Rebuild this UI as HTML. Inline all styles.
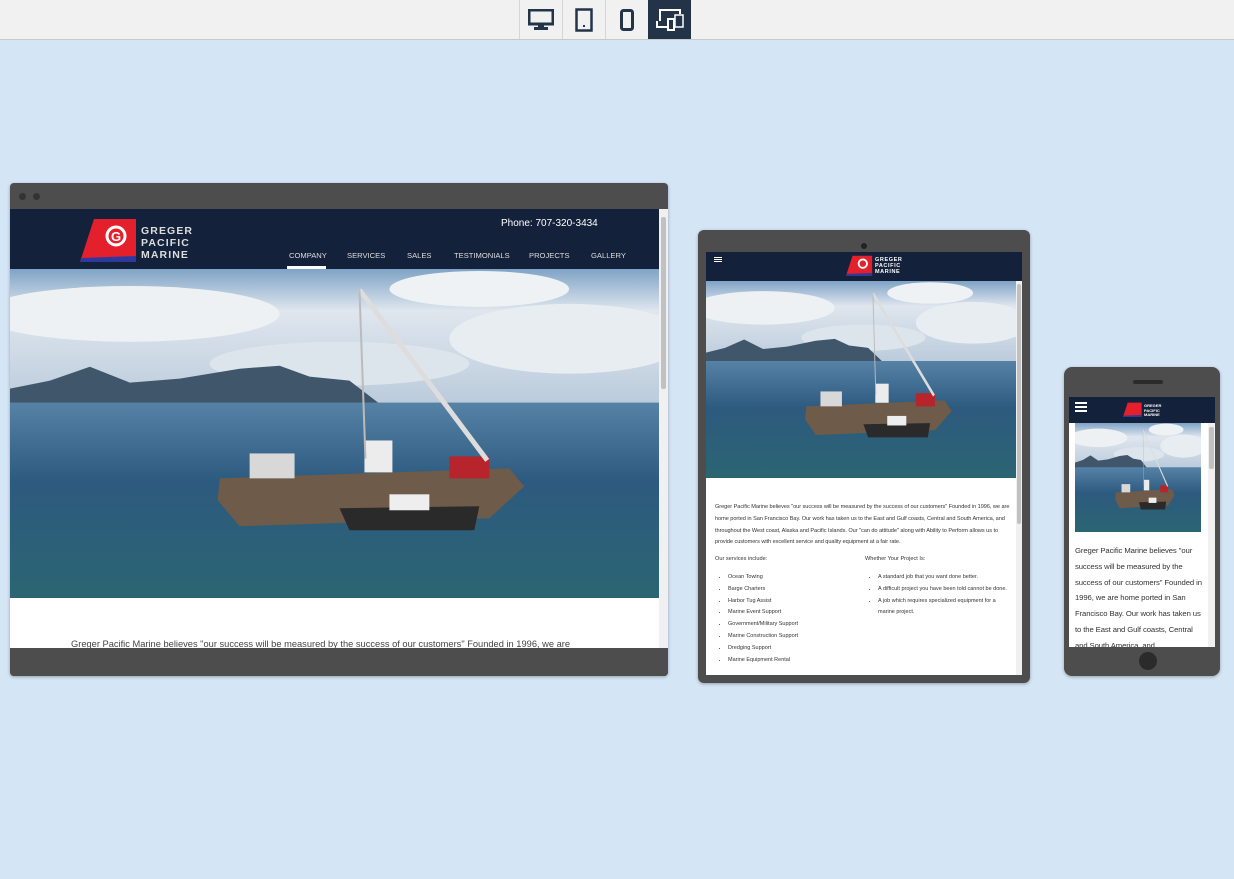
<!DOCTYPE html>
<html><head><meta charset="utf-8"><style>
*{margin:0;padding:0;box-sizing:border-box}
body{width:1234px;height:879px;background:#d4e5f5;font-family:"Liberation Sans",sans-serif;position:relative;overflow:hidden}
.a{position:absolute}
.top{left:0;top:0;width:1234px;height:40px;background:#f1f1f1;border-bottom:1px solid #c9c9c9}
.tb{top:0;height:39px;width:43px;border-left:1px solid #d6d6d6;display:flex;align-items:center;justify-content:center}
.navy{background:#13223a}
.photo{overflow:hidden}
.photo svg{width:100%;height:100%;display:block}
.sb{background:#f0f0f0}
.sb i{position:absolute;left:2px;width:5px;background:#c1c1c1;border-radius:2px}
.t{color:#333;font-family:"Liberation Sans",sans-serif}
ul{list-style:disc}
</style></head><body>
<div class="a top"></div>
<div class="a tb" style="left:519px"><svg width="26" height="22" viewBox="0 0 26 22"><rect x="1" y="1" width="24" height="14" fill="none" stroke="#233449" stroke-width="3"/><rect x="10" y="15" width="6" height="4" fill="#233449"/><rect x="6" y="18" width="14" height="3" fill="#233449"/></svg></div>
<div class="a tb" style="left:562px"><svg width="18" height="24" viewBox="0 0 18 24"><rect x="1.5" y="1.5" width="15" height="21" fill="none" stroke="#233449" stroke-width="2.5"/><rect x="8" y="17" width="2" height="2" fill="#233449"/></svg></div>
<div class="a tb" style="left:605px"><svg width="14" height="22" viewBox="0 0 14 22"><rect x="1.5" y="1.5" width="11" height="19" rx="2" fill="none" stroke="#233449" stroke-width="3"/></svg></div>
<div class="a tb" style="left:648px;background:#233449;border-left:none"><svg width="32" height="26" viewBox="0 0 32 26"><path d="M6 14V3h20v4M3 14v6h10" fill="none" stroke="#fff" stroke-width="2"/><rect x="14" y="12" width="6" height="11" fill="none" stroke="#fff" stroke-width="2"/><rect x="21" y="8" width="8" height="12" fill="none" stroke="#fff" stroke-width="1.5"/></svg></div>

<svg width="0" height="0" style="position:absolute"><defs>
<linearGradient id="sky" x1="0" y1="0" x2="0" y2="1"><stop offset="0" stop-color="#7fa3c6"/><stop offset=".3" stop-color="#dfe6ee"/><stop offset="1" stop-color="#b9cadb"/></linearGradient>
<linearGradient id="sea" x1="0" y1="0" x2="0" y2="1"><stop offset="0" stop-color="#5682a6"/><stop offset=".4" stop-color="#2d5a7f"/><stop offset="1" stop-color="#2b6572"/></linearGradient>
<symbol id="ph" viewBox="0 0 650 330" preserveAspectRatio="none">
<rect width="650" height="140" fill="url(#sky)"/>
<ellipse cx="120" cy="45" rx="150" ry="28" fill="#eef1f4"/><ellipse cx="560" cy="70" rx="120" ry="35" fill="#e8edf2"/><ellipse cx="330" cy="95" rx="130" ry="22" fill="#dde5ec"/><ellipse cx="470" cy="20" rx="90" ry="18" fill="#eef2f5"/>
<path d="M0 120 L40 112 L80 98 L120 114 L170 110 L230 100 L270 97 L300 108 L340 112 L370 135 L0 135Z" fill="#3f566b"/>
<rect y="134" width="650" height="196" fill="url(#sea)"/>
<path d="M210 210 L500 200 L515 218 L480 250 L230 258 L208 232Z" fill="#6e5b49"/>
<rect x="240" y="185" width="45" height="25" fill="#d8d8d8"/><rect x="355" y="172" width="28" height="32" fill="#ececec"/>
<rect x="440" y="188" width="40" height="22" fill="#b8242c"/>
<path d="M330 240 L470 238 L465 262 L340 262Z" fill="#2a2a2a"/><rect x="380" y="226" width="40" height="16" fill="#eee"/>
<path d="M350 21 L478 192" stroke="#ddd" stroke-width="5"/><path d="M350 21 L356 190" stroke="#bbb" stroke-width="2"/>
</symbol>
</defs></svg>

<!-- desktop -->
<div class="a" style="left:10px;top:183px;width:658px;height:493px;background:#4d4d4d;border-radius:4px;box-shadow:0 1px 3px rgba(0,0,0,.3)"></div>
<div class="a" style="left:19px;top:193px;width:7px;height:7px;border-radius:50%;background:#333"></div>
<div class="a" style="left:33px;top:193px;width:7px;height:7px;border-radius:50%;background:#333"></div>
<div class="a" style="left:10px;top:209px;width:649px;height:439px;background:#fff"></div>
<div class="a sb" style="left:659px;top:209px;width:9px;height:439px"><i style="top:8px;height:172px"></i></div>
<div class="a navy" style="left:10px;top:209px;width:649px;height:60px"></div>
<svg class="a" style="left:80px;top:218px" width="60" height="46" viewBox="0 0 60 46"><path d="M14 1 H56 V44 H0Z" fill="#e3202b"/><path d="M2 40 L56 38 L56 44 H0Z" fill="#2c3aa0"/><circle cx="36" cy="18" r="9" fill="none" stroke="#fff" stroke-width="3"/><text x="31" y="23" fill="#fff" font-size="13" font-weight="bold" font-family="Liberation Sans">G</text></svg>
<div class="a" style="left:141px;top:225px;color:#ddd;font-weight:bold;font-size:10.5px;line-height:12px;letter-spacing:1.1px">GREGER<br>PACIFIC<br>MARINE</div>
<div class="a" style="left:501px;top:218px;color:#fff;font-size:10px">Phone: 707-320-3434</div>
<div class="a" style="top:251px;left:289px;color:#ddd;font-size:7.6px;display:flex;gap:0">
<span style="width:58px">COMPANY</span><span style="width:60px">SERVICES</span><span style="width:47px">SALES</span><span style="width:75px">TESTIMONIALS</span><span style="width:62px">PROJECTS</span><span>GALLERY</span></div>
<div class="a" style="left:287px;top:266px;width:39px;height:3px;background:#fff"></div>
<div class="a photo" style="left:10px;top:269px;width:649px;height:329px"><svg><use href="#ph"/></svg></div>
<div class="a t" style="left:71px;top:639px;font-size:9.3px;color:#444">Greger Pacific Marine believes "our success will be measured by the success of our customers" Founded in 1996, we are</div>
<div class="a" style="left:10px;top:648px;width:658px;height:28px;background:#4d4d4d;border-radius:0 0 4px 4px"></div>

<!-- tablet -->
<div class="a" style="left:698px;top:230px;width:332px;height:453px;background:#4d4d4d;border-radius:6px;box-shadow:0 1px 3px rgba(0,0,0,.3)"></div>
<div class="a" style="left:861px;top:243px;width:6px;height:6px;border-radius:50%;background:#222"></div>
<div class="a" style="left:706px;top:252px;width:316px;height:423px;background:#fff"></div>
<div class="a sb" style="left:1016px;top:281px;width:6px;height:394px"><i style="left:1px;width:4px;top:3px;height:240px"></i></div>
<div class="a navy" style="left:706px;top:252px;width:316px;height:29px"></div>
<div class="a" style="left:714px;top:257px;width:8px;height:5px;border-top:1px solid #fff;border-bottom:1px solid #fff"></div><div class="a" style="left:714px;top:259px;width:8px;height:1px;background:#fff"></div>
<svg class="a" style="left:846px;top:255px" width="28" height="22" viewBox="0 0 60 46"><path d="M14 1 H56 V44 H0Z" fill="#e3202b"/><path d="M2 40 L56 38 L56 44 H0Z" fill="#2c3aa0"/><circle cx="36" cy="18" r="9" fill="none" stroke="#fff" stroke-width="4"/></svg>
<div class="a" style="left:875px;top:257px;color:#fff;font-weight:bold;font-size:5.5px;line-height:6px;letter-spacing:.6px">GREGER<br>PACIFIC<br>MARINE</div>
<div class="a photo" style="left:706px;top:281px;width:310px;height:197px"><svg><use href="#ph"/></svg></div>
<div class="a t" style="left:715px;top:502px;width:296px;font-size:5.6px;line-height:11.8px;letter-spacing:-.05px">Greger Pacific Marine believes "our success will be measured by the success of our customers" Founded in 1996, we are home ported in San Francisco Bay. Our work has taken us to the East and Gulf coasts, Central and South America, and throughout the West coast, Alaska and Pacific Islands. Our "can do attitude" along with Ability to Perform allows us to provide customers with excellent service and quality equipment at a fair rate.</div>
<div class="a t" style="left:715px;top:556px;font-size:5.6px">Our services include:</div>
<div class="a t" style="left:865px;top:556px;font-size:5.6px">Whether Your Project Is:</div>
<ul class="a t" style="left:728px;top:572px;font-size:5.5px;line-height:11.8px"><li>Ocean Towing</li><li>Barge Charters</li><li>Harbor Tug Assist</li><li>Marine Event Support</li><li>Government/Military Support</li><li>Marine Construction Support</li><li>Dredging Support</li><li>Marine Equipment Rental</li></ul>
<ul class="a t" style="left:878px;top:572px;width:130px;font-size:5.5px;line-height:11.8px"><li>A standard job that you want done better.</li><li>A difficult project you have been told cannot be done.</li><li>A job which requires specialized equipment for a marine project.</li></ul>

<!-- phone -->
<div class="a" style="left:1064px;top:367px;width:156px;height:309px;background:#4d4d4d;border-radius:8px;box-shadow:0 1px 3px rgba(0,0,0,.3)"></div>
<div class="a" style="left:1133px;top:380px;width:30px;height:4px;border-radius:2px;background:#2b2b2b"></div>
<div class="a" style="left:1139px;top:652px;width:18px;height:18px;border-radius:50%;background:#2b2b2b"></div>
<div class="a" style="left:1069px;top:397px;width:146px;height:250px;background:#fff"></div>
<div class="a sb" style="left:1208px;top:423px;width:7px;height:224px"><i style="left:1px;width:5px;top:4px;height:42px"></i></div>
<div class="a navy" style="left:1069px;top:397px;width:146px;height:26px"></div>
<div class="a" style="left:1075px;top:402px;width:12px;height:2px;background:#fff;box-shadow:0 4px 0 #fff,0 8px 0 #fff"></div>
<svg class="a" style="left:1123px;top:402px" width="20" height="16" viewBox="0 0 60 46"><path d="M14 1 H56 V44 H0Z" fill="#e3202b"/><path d="M2 40 L56 38 L56 44 H0Z" fill="#2c3aa0"/></svg>
<div class="a" style="left:1144px;top:404px;color:#fff;font-weight:bold;font-size:4px;line-height:4.5px">GREGER<br>PACIFIC<br>MARINE</div>
<div class="a photo" style="left:1075px;top:423px;width:126px;height:109px"><svg><use href="#ph"/></svg></div>
<div class="a t" style="left:1075px;top:543px;width:130px;height:104px;overflow:hidden;font-size:7.7px;line-height:15.8px;letter-spacing:-.1px">Greger Pacific Marine believes "our success will be measured by the success of our customers" Founded in 1996, we are home ported in San Francisco Bay. Our work has taken us to the East and Gulf coasts, Central and South America, and</div>
</body></html>
